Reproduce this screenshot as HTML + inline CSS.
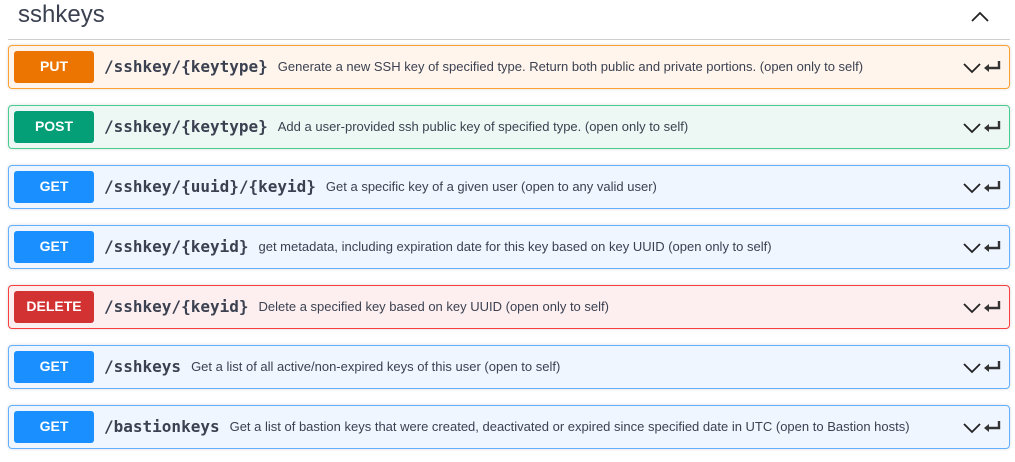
<!DOCTYPE html>
<html><head><meta charset="utf-8"><style>
body{margin:0;width:1015px;height:462px;background:#fff;font-family:"Liberation Sans",Arial,sans-serif;overflow:hidden;position:relative}
.h{position:absolute;left:18px;top:0;font-size:24px;color:#3b4151;line-height:30px}
.line{position:absolute;left:8px;top:39px;width:1002px;height:1px;background:#cfcfcf}
.up{position:absolute;left:970px;top:10px}
.row{position:absolute;left:8px;width:1000px;height:42px;border:1px solid;border-radius:4px;box-shadow:0 0 3px rgba(0,0,0,.15)}
.b{position:absolute;left:5px;top:5px;width:80px;height:32px;border-radius:3px;color:#fff;font-weight:bold;font-size:14px;text-align:center;line-height:30px}
.p{position:absolute;left:95px;top:0;line-height:42px;font-family:"DejaVu Sans Mono",monospace;font-weight:bold;font-size:16px;color:#3b4151}
.d{font-family:"Liberation Sans",Arial,sans-serif;font-weight:normal;font-size:13px;margin-left:10px;vertical-align:1px}
.ic{position:absolute;right:7px;top:13px}
.put{border-color:#fca130;background:#fff5ec}.put .b{background:#eb7500}
.post{border-color:#49cc90;background:#edf8f4}.post .b{background:#049e77}
.get{border-color:#61affe;background:#eff6ff}.get .b{background:#1a8fff}
.del{border-color:#f93e3e;background:#fdefef}.del .b{background:#d23232}
</style></head><body>
<div class="h">sshkeys</div>
<svg class="up" width="20" height="14" viewBox="0 0 20 14"><path d="M2 11 L10 3 L18 11" fill="none" stroke="#222" stroke-width="1.8"/></svg>
<div class="line"></div>

<div class="row put" style="top:45px"><div class="b">PUT</div><div class="p">/sshkey/{keytype}<span class="d">Generate a new SSH key of specified type. Return both public and private portions. (open only to self)</span></div><svg class="ic" width="40" height="16" viewBox="0 0 40 16"><path d="M2 5 L10 13 L18 5" fill="none" stroke="#222" stroke-width="1.8"/><path d="M37 2 V9 H24" fill="none" stroke="#333" stroke-width="2.4"/><path d="M27 5 L22 9 L27 13Z" fill="#333"/></svg></div>

<div class="row post" style="top:105px"><div class="b">POST</div><div class="p">/sshkey/{keytype}<span class="d">Add a user-provided ssh public key of specified type. (open only to self)</span></div><svg class="ic" width="40" height="16" viewBox="0 0 40 16"><path d="M2 5 L10 13 L18 5" fill="none" stroke="#222" stroke-width="1.8"/><path d="M37 2 V9 H24" fill="none" stroke="#333" stroke-width="2.4"/><path d="M27 5 L22 9 L27 13Z" fill="#333"/></svg></div>

<div class="row get" style="top:165px"><div class="b">GET</div><div class="p">/sshkey/{uuid}/{keyid}<span class="d">Get a specific key of a given user (open to any valid user)</span></div><svg class="ic" width="40" height="16" viewBox="0 0 40 16"><path d="M2 5 L10 13 L18 5" fill="none" stroke="#222" stroke-width="1.8"/><path d="M37 2 V9 H24" fill="none" stroke="#333" stroke-width="2.4"/><path d="M27 5 L22 9 L27 13Z" fill="#333"/></svg></div>

<div class="row get" style="top:225px"><div class="b">GET</div><div class="p">/sshkey/{keyid}<span class="d">get metadata, including expiration date for this key based on key UUID (open only to self)</span></div><svg class="ic" width="40" height="16" viewBox="0 0 40 16"><path d="M2 5 L10 13 L18 5" fill="none" stroke="#222" stroke-width="1.8"/><path d="M37 2 V9 H24" fill="none" stroke="#333" stroke-width="2.4"/><path d="M27 5 L22 9 L27 13Z" fill="#333"/></svg></div>

<div class="row del" style="top:285px"><div class="b">DELETE</div><div class="p">/sshkey/{keyid}<span class="d">Delete a specified key based on key UUID (open only to self)</span></div><svg class="ic" width="40" height="16" viewBox="0 0 40 16"><path d="M2 5 L10 13 L18 5" fill="none" stroke="#222" stroke-width="1.8"/><path d="M37 2 V9 H24" fill="none" stroke="#333" stroke-width="2.4"/><path d="M27 5 L22 9 L27 13Z" fill="#333"/></svg></div>

<div class="row get" style="top:345px"><div class="b">GET</div><div class="p">/sshkeys<span class="d">Get a list of all active/non-expired keys of this user (open to self)</span></div><svg class="ic" width="40" height="16" viewBox="0 0 40 16"><path d="M2 5 L10 13 L18 5" fill="none" stroke="#222" stroke-width="1.8"/><path d="M37 2 V9 H24" fill="none" stroke="#333" stroke-width="2.4"/><path d="M27 5 L22 9 L27 13Z" fill="#333"/></svg></div>

<div class="row get" style="top:405px"><div class="b">GET</div><div class="p">/bastionkeys<span class="d">Get a list of bastion keys that were created, deactivated or expired since specified date in UTC (open to Bastion hosts)</span></div><svg class="ic" width="40" height="16" viewBox="0 0 40 16"><path d="M2 5 L10 13 L18 5" fill="none" stroke="#222" stroke-width="1.8"/><path d="M37 2 V9 H24" fill="none" stroke="#333" stroke-width="2.4"/><path d="M27 5 L22 9 L27 13Z" fill="#333"/></svg></div>
</body></html>
